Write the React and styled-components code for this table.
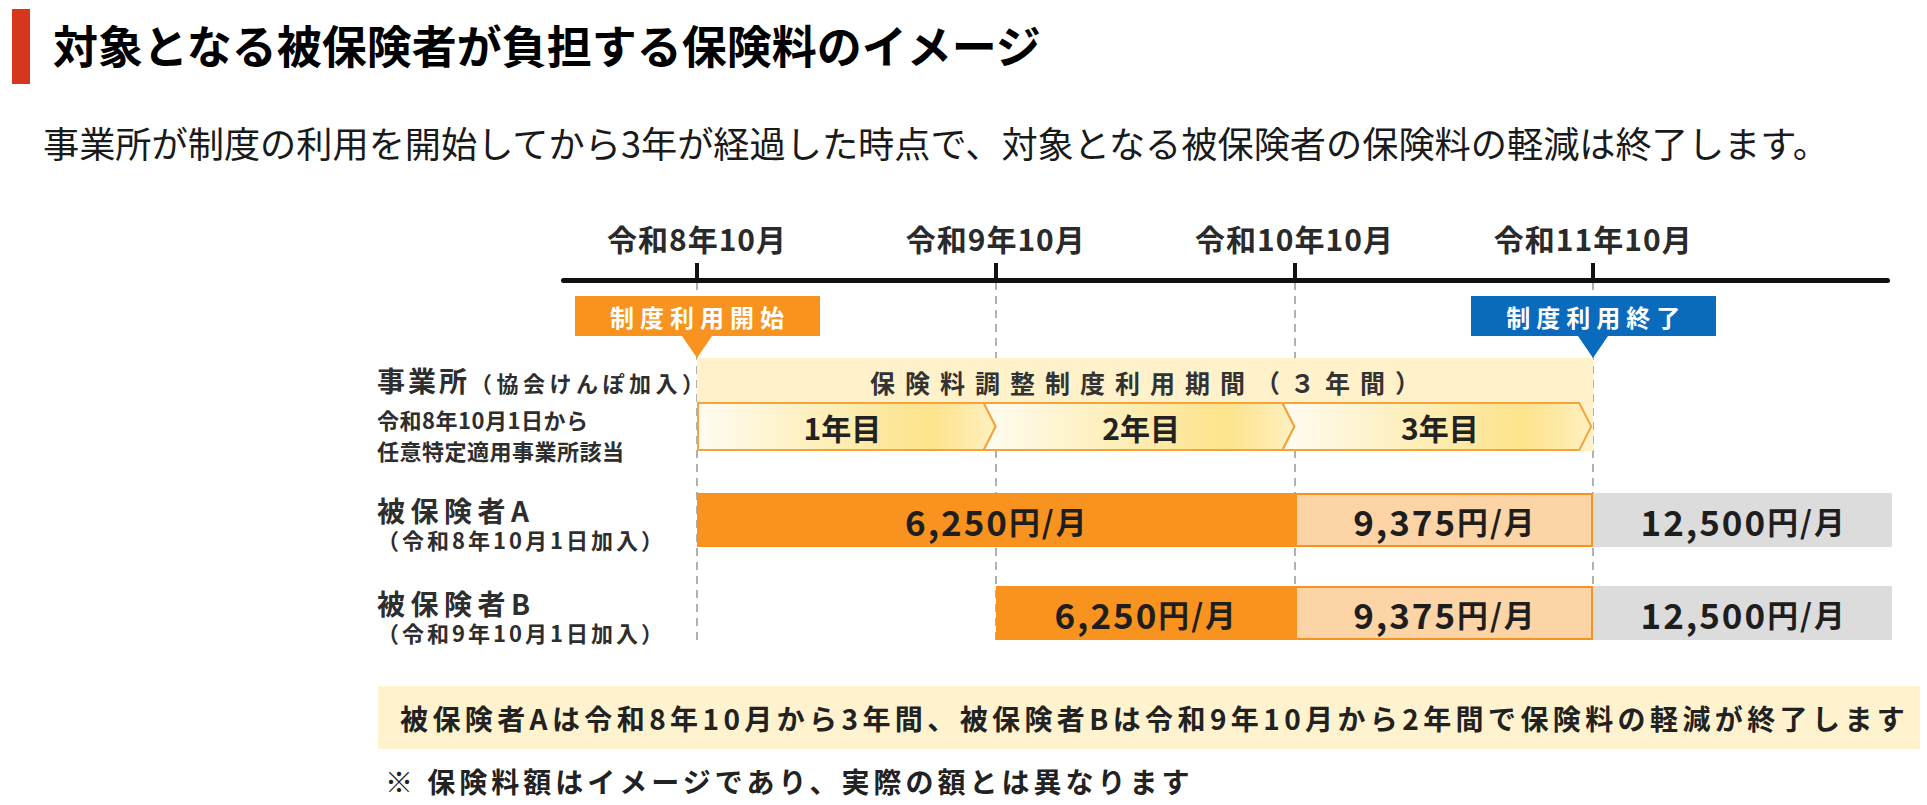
import React from "react";
import styled, { createGlobalStyle } from "styled-components";

const COL = 298.75;
const LABEL_W = 320;

const GlobalStyle = createGlobalStyle`
  html, body {
    margin: 0;
    padding: 0;
    background: #fff;
  }
  body {
    font-family: "Noto Sans CJK JP", "Noto Sans", sans-serif;
    color: #222;
  }
`;

const Page = styled.div`
  width: 1927px;
  padding-top: 9px;
`;

const Header = styled.header`
  display: flex;
  align-items: center;
  gap: 23px;
  height: 75px;
  padding-left: 12px;
`;

const RedBar = styled.span`
  width: 18px;
  height: 75px;
  background: #d6361b;
`;

const Title = styled.h1`
  margin: 0 0 4px;
  font-size: 45px;
  font-weight: 700;
  line-height: 1;
  color: #000;
`;

const Lead = styled.p`
  margin: 32px 0 0 43px;
  font-size: 36.2px;
  font-weight: 400;
  line-height: 52px;
  color: #1a1a1a;
`;

const Chart = styled.section`
  position: relative;
  width: 1515px;
  margin: 52px 0 0 377px;
  color: #2e2e2e;
  font-weight: 700;

  & > * {
    position: relative;
    z-index: 1;
  }
`;

const GridLines = styled.div`
  position: absolute !important;
  z-index: 0 !important;
  top: 62px;
  left: 0;
  width: 100%;
  height: 363px;
  pointer-events: none;
`;

const Dash = styled.span`
  position: absolute;
  top: 0;
  bottom: 0;
  width: 2px;
  background: repeating-linear-gradient(to bottom, #b0b0b0 0 8px, transparent 8px 14px);
`;

const TickRow = styled.div`
  display: grid;
  grid-template-columns: repeat(4, ${COL}px);
  margin-left: ${LABEL_W - COL / 2}px;
`;

const YearCell = styled.div`
  display: flex;
  flex-direction: column;
  align-items: center;
`;

const YearLabel = styled.span`
  font-size: 30px;
  line-height: 36px;
  letter-spacing: 1px;
  color: #2a2a2a;
`;

const Tick = styled.span`
  width: 4px;
  height: 15px;
  margin-top: 7px;
  background: #111;
`;

const Axis = styled.div`
  margin-left: 184px;
  width: 1329px;
  height: 5px;
  border-radius: 3px;
  background: #111;
`;

const BadgeRow = styled(TickRow)`
  margin-top: 13px;
  height: 62px;
`;

const BadgeCell = styled.div`
  display: flex;
  justify-content: center;
`;

const Badge = styled.div`
  position: relative;
  width: 245px;
  height: 40px;
  display: flex;
  align-items: center;
  justify-content: center;
  padding-left: 6px;
  box-sizing: border-box;
  background: ${(p) => p.$color};
  color: #fff;
  font-size: 24px;
  letter-spacing: 6px;

  &::after {
    content: "";
    position: absolute;
    top: 100%;
    left: 50%;
    transform: translateX(-50%);
    border-left: 15px solid transparent;
    border-right: 15px solid transparent;
    border-top: 22px solid ${(p) => p.$color};
  }
`;

const OfficeRow = styled.div`
  display: grid;
  grid-template-columns: ${LABEL_W}px ${COL * 3}px;
  align-items: start;
`;

const OfficeLabel = styled.div`
  display: flex;
  flex-direction: column;
`;

const OfficeName = styled.span`
  font-size: 28px;
  line-height: 44px;
  letter-spacing: 3px;
  white-space: nowrap;
`;

const OfficeNameNote = styled.span`
  font-size: 22px;
  letter-spacing: 4.5px;
`;

const OfficeNote = styled.p`
  margin: 0;
  font-size: 22px;
  line-height: 31px;
  letter-spacing: 0.5px;
  white-space: nowrap;
`;

const Band = styled.div`
  display: flex;
  flex-direction: column;
  background: #fff2cb;
`;

const BandTitle = styled.div`
  height: 44px;
  box-sizing: border-box;
  padding: 4px 0 0 10px;
  display: flex;
  align-items: center;
  justify-content: center;
  font-size: 25px;
  letter-spacing: 10px;
  color: #333;
`;

const Steps = styled.div`
  position: relative;
  display: flex;
  height: 49px;
`;

const StepsArt = styled.svg`
  position: absolute;
  inset: 0;
`;

const Step = styled.div`
  position: relative;
  flex: 0 0 ${COL}px;
  display: flex;
  align-items: center;
  justify-content: center;
  padding-right: 8px;
  box-sizing: border-box;
  font-size: 30px;
  color: #222;
`;

const PersonRow = styled.div`
  display: grid;
  grid-template-columns: ${LABEL_W}px repeat(4, ${COL}px);
  grid-auto-rows: 54px;
  margin-top: ${(p) => p.$top}px;
`;

const PersonLabel = styled.div`
  display: flex;
  flex-direction: column;
`;

const PersonName = styled.span`
  font-size: 28px;
  line-height: 34px;
  letter-spacing: 5.5px;
`;

const PersonJoin = styled.span`
  font-size: 22px;
  line-height: 24px;
  letter-spacing: 3px;
  white-space: nowrap;
`;

const barColors = {
  reduced: { bg: "#f7931e", border: "#f7931e" },
  partial: { bg: "#fdd4a6", border: "#f7931e" },
  normal: { bg: "#dcdcdc", border: "#dcdcdc" },
};

const Bar = styled.div`
  grid-column: ${(p) => p.$col} / span ${(p) => p.$span};
  display: flex;
  align-items: center;
  justify-content: center;
  box-sizing: border-box;
  padding-left: 2px;
  background: ${(p) => barColors[p.$kind].bg};
  border: 2px solid ${(p) => barColors[p.$kind].border};
  font-size: 35px;
  letter-spacing: 2px;
  color: #1e1e1e;
`;

const Unit = styled.span`
  font-size: 0.88em;
`;

const Note = styled.div`
  margin: 46px 0 0 378px;
  width: 1542px;
  height: 63px;
  box-sizing: border-box;
  padding-left: 22px;
  display: flex;
  align-items: center;
  background: #fff3cf;
  font-size: 28px;
  font-weight: 700;
  letter-spacing: 4.4px;
  color: #222;
  white-space: nowrap;
`;

const Footnote = styled.p`
  margin: 14px 0 0 385px;
  font-size: 28px;
  font-weight: 700;
  line-height: 36px;
  letter-spacing: 4px;
  color: #222;
`;

const years = ["令和8年10月", "令和9年10月", "令和10年10月", "令和11年10月"];

const people = [
  {
    name: "被保険者A",
    join: "（令和8年10月1日加入）",
    top: 27,
    bars: [
      { col: 2, span: 2, kind: "reduced", amount: "6,250" },
      { col: 4, span: 1, kind: "partial", amount: "9,375" },
      { col: 5, span: 1, kind: "normal", amount: "12,500" },
    ],
  },
  {
    name: "被保険者B",
    join: "（令和9年10月1日加入）",
    top: 39,
    bars: [
      { col: 3, span: 1, kind: "reduced", amount: "6,250" },
      { col: 4, span: 1, kind: "partial", amount: "9,375" },
      { col: 5, span: 1, kind: "normal", amount: "12,500" },
    ],
  },
];

function StepShapes() {
  const h = 49;
  const m = h / 2;
  const d = 12;
  const x = [1, COL, COL * 2, COL * 3 - 2];
  const shapes = [
    `1,1 ${x[1] - d},1 ${x[1]},${m} ${x[1] - d},${h - 1} 1,${h - 1}`,
    `${x[1] - d},1 ${x[2] - d},1 ${x[2]},${m} ${x[2] - d},${h - 1} ${x[1] - d},${h - 1} ${x[1]},${m}`,
    `${x[2] - d},1 ${x[3] - d},1 ${x[3]},${m} ${x[3] - d},${h - 1} ${x[2] - d},${h - 1} ${x[2]},${m}`,
  ];
  return (
    <StepsArt width={COL * 3} height={h} viewBox={`0 0 ${COL * 3} ${h}`}>
      <defs>
        <linearGradient id="stepFill" x1="0" y1="0" x2="1" y2="0">
          <stop offset="0" stopColor="#fffcf1" />
          <stop offset="0.78" stopColor="#fde38b" />
          <stop offset="1" stopColor="#fff0c0" />
        </linearGradient>
      </defs>
      {shapes.map((pts, i) => (
        <polygon key={i} points={pts} fill="url(#stepFill)" stroke="#f5a33b" strokeWidth="2" strokeLinejoin="miter" />
      ))}
    </StepsArt>
  );
}

export default function App() {
  return (
    <Page>
      <GlobalStyle />
      <Header>
        <RedBar />
        <Title>対象となる被保険者が負担する保険料のイメージ</Title>
      </Header>
      <Lead>事業所が制度の利用を開始してから3年が経過した時点で、対象となる被保険者の保険料の軽減は終了します。</Lead>

      <Chart>
        <GridLines>
          {[0, 1, 2, 3].map((i) => (
            <Dash key={i} style={{ left: LABEL_W + i * COL - 1 }} />
          ))}
        </GridLines>

        <TickRow>
          {years.map((y) => (
            <YearCell key={y}>
              <YearLabel>{y}</YearLabel>
              <Tick />
            </YearCell>
          ))}
        </TickRow>
        <Axis />

        <BadgeRow>
          <BadgeCell>
            <Badge $color="#f7931e">制度利用開始</Badge>
          </BadgeCell>
          <BadgeCell />
          <BadgeCell />
          <BadgeCell>
            <Badge $color="#0a6bbd">制度利用終了</Badge>
          </BadgeCell>
        </BadgeRow>

        <OfficeRow>
          <OfficeLabel>
            <OfficeName>
              事業所<OfficeNameNote>（協会けんぽ加入）</OfficeNameNote>
            </OfficeName>
            <OfficeNote>
              令和8年10月1日から
              <br />
              任意特定適用事業所該当
            </OfficeNote>
          </OfficeLabel>
          <Band>
            <BandTitle>保険料調整制度利用期間（３年間）</BandTitle>
            <Steps>
              <StepShapes />
              <Step>1年目</Step>
              <Step>2年目</Step>
              <Step>3年目</Step>
            </Steps>
          </Band>
        </OfficeRow>

        {people.map((p) => (
          <PersonRow key={p.name} $top={p.top}>
            <PersonLabel>
              <PersonName>{p.name}</PersonName>
              <PersonJoin>{p.join}</PersonJoin>
            </PersonLabel>
            {p.bars.map((b) => (
              <Bar key={b.col} $col={b.col} $span={b.span} $kind={b.kind}>
                {b.amount}
                <Unit>円/月</Unit>
              </Bar>
            ))}
          </PersonRow>
        ))}
      </Chart>

      <Note>被保険者Aは令和8年10月から3年間、被保険者Bは令和9年10月から2年間で保険料の軽減が終了します</Note>
      <Footnote>※ 保険料額はイメージであり、実際の額とは異なります</Footnote>
    </Page>
  );
}
